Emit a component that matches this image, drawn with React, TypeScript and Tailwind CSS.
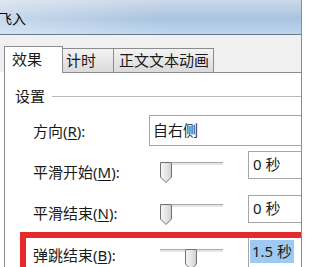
import React from "react";

function Slider({ pos }: { pos: number }) {
  return (
    <div className="relative w-[63px] h-[21px]">
      <div className="mt-[9px] h-[3px] border-t border-[#a9a9a9] bg-[#e6e6e6]" />
      <svg
        className="absolute top-0"
        style={{ left: pos }}
        width="12"
        height="21"
        viewBox="0 0 12 21"
      >
        <defs>
          <linearGradient id="thumbg" x1="0" y1="0" x2="1" y2="0">
            <stop offset="0" stopColor="#f7f7f7" />
            <stop offset="0.5" stopColor="#e6e6e6" />
            <stop offset="1" stopColor="#cfcfcf" />
          </linearGradient>
        </defs>
        <path
          d="M0.5 2 Q0.5 0.5 2 0.5 H10 Q11.5 0.5 11.5 2 V15 L6 20.5 L0.5 15 Z"
          fill="url(#thumbg)"
          stroke="#707070"
          strokeWidth="1"
        />
      </svg>
    </div>
  );
}

export default function App() {
  return (
    <div className="w-[303px] h-[267px] overflow-hidden bg-white text-[#1a1a1a] text-[15px] font-['Noto_Sans','Noto_Sans_CJK_SC',sans-serif]">
      <div className="w-[302px] h-full border-r border-[#8c8c8c] flex flex-col">
        {/* title bar */}
        <div className="h-[35px] shrink-0 border-b border-[#6b7a8a] bg-[linear-gradient(to_right,rgba(255,255,255,0.35),rgba(255,255,255,0)_55%),linear-gradient(to_bottom,#cbd9ea,#aac3df_55%,#bdd6f0)]">
          <div className="ml-[-2px] pt-[11px] text-[14px] leading-[16px] text-black">飞入</div>
        </div>

        {/* tab strip */}
        <div className="h-[37px] shrink-0 bg-[#f0f0f0] flex items-end pl-[4px]">
          <div className="relative z-10 mb-[-1px] w-[59px] h-[27px] border border-b-0 border-[#8c8c8c] bg-white pl-[7px] pt-[2px] leading-[20px]">
            效果
          </div>
          <div className="w-[51px] h-[24px] border-t border-r border-[#8c8c8c] bg-[linear-gradient(to_bottom,#f3f3f3,#dadada)] pl-[3px] pt-[1px] leading-[20px]">
            计时
          </div>
          <div className="w-[100px] h-[24px] border-t border-r border-[#8c8c8c] bg-[linear-gradient(to_bottom,#f3f3f3,#dadada)] pl-[5px] pt-[1px] leading-[20px]">
            正文文本动画
          </div>
        </div>

        {/* panel */}
        <div className="flex-1 ml-[4px] border-t border-l border-[#8c8c8c] bg-white flex flex-col">
          <div className="mt-[13px] flex items-center pl-[10px] leading-[20px]">
            <span>设置</span>
            <div className="ml-[7px] flex-1 h-px bg-[#b9b9b9]" />
          </div>

          {/* row 1 */}
          <div className="mt-[9px] flex items-center h-[31px] pl-[28px]">
            <div className="w-[116px] leading-[20px]">
              方向(<span className="underline underline-offset-2">R</span>):
            </div>
            <div className="flex-1 h-[31px] border-y border-l border-[#a5a5a5] pl-[3px] leading-[29px]">
              自右侧
            </div>
          </div>

          {/* row 2 */}
          <div className="mt-[5px] flex h-[28px] pl-[28px]">
            <div className="w-[116px] pt-[11px] leading-[20px] whitespace-nowrap">
              平滑开始(<span className="underline underline-offset-2">M</span>):
            </div>
            <div className="w-[99px] pl-[11px] pt-[2px]">
              <Slider pos={0} />
            </div>
            <div className="flex-1 border-y border-l border-[#a5a5a5] pl-[4px] leading-[24px]">
              0 秒
            </div>
          </div>

          {/* row 3 */}
          <div className="mt-[16px] flex h-[28px] pl-[28px]">
            <div className="w-[116px] pt-[8px] leading-[20px] whitespace-nowrap">
              平滑结束(<span className="underline underline-offset-2">N</span>):
            </div>
            <div className="w-[99px] pl-[11px] pt-[0px]">
              <Slider pos={0} />
            </div>
            <div className="flex-1 border-y border-l border-[#a5a5a5] pl-[4px] leading-[24px]">
              0 秒
            </div>
          </div>

          {/* row 4 in red frame */}
          <div className="mt-[9px] ml-[15px] flex-1 border-l-[6px] border-t-[6px] border-[#e62a2a]">
            <div className="flex h-[30px] pl-[7px]">
              <div className="w-[116px] pt-[7px] leading-[20px] whitespace-nowrap">
                弹跳结束(<span className="underline underline-offset-2">B</span>):
              </div>
              <div className="w-[99px] pl-[11px] pt-[2px]">
                <Slider pos={25} />
              </div>
              <div className="flex-1 border-l border-[#a5a5a5] pl-[1px] pt-[2px]">
                <span className="inline-block h-[23px] px-[2px] leading-[23px] bg-[#9ec9f0]">
                  1.5 秒
                </span>
              </div>
            </div>
          </div>
        </div>
      </div>
    </div>
  );
}
